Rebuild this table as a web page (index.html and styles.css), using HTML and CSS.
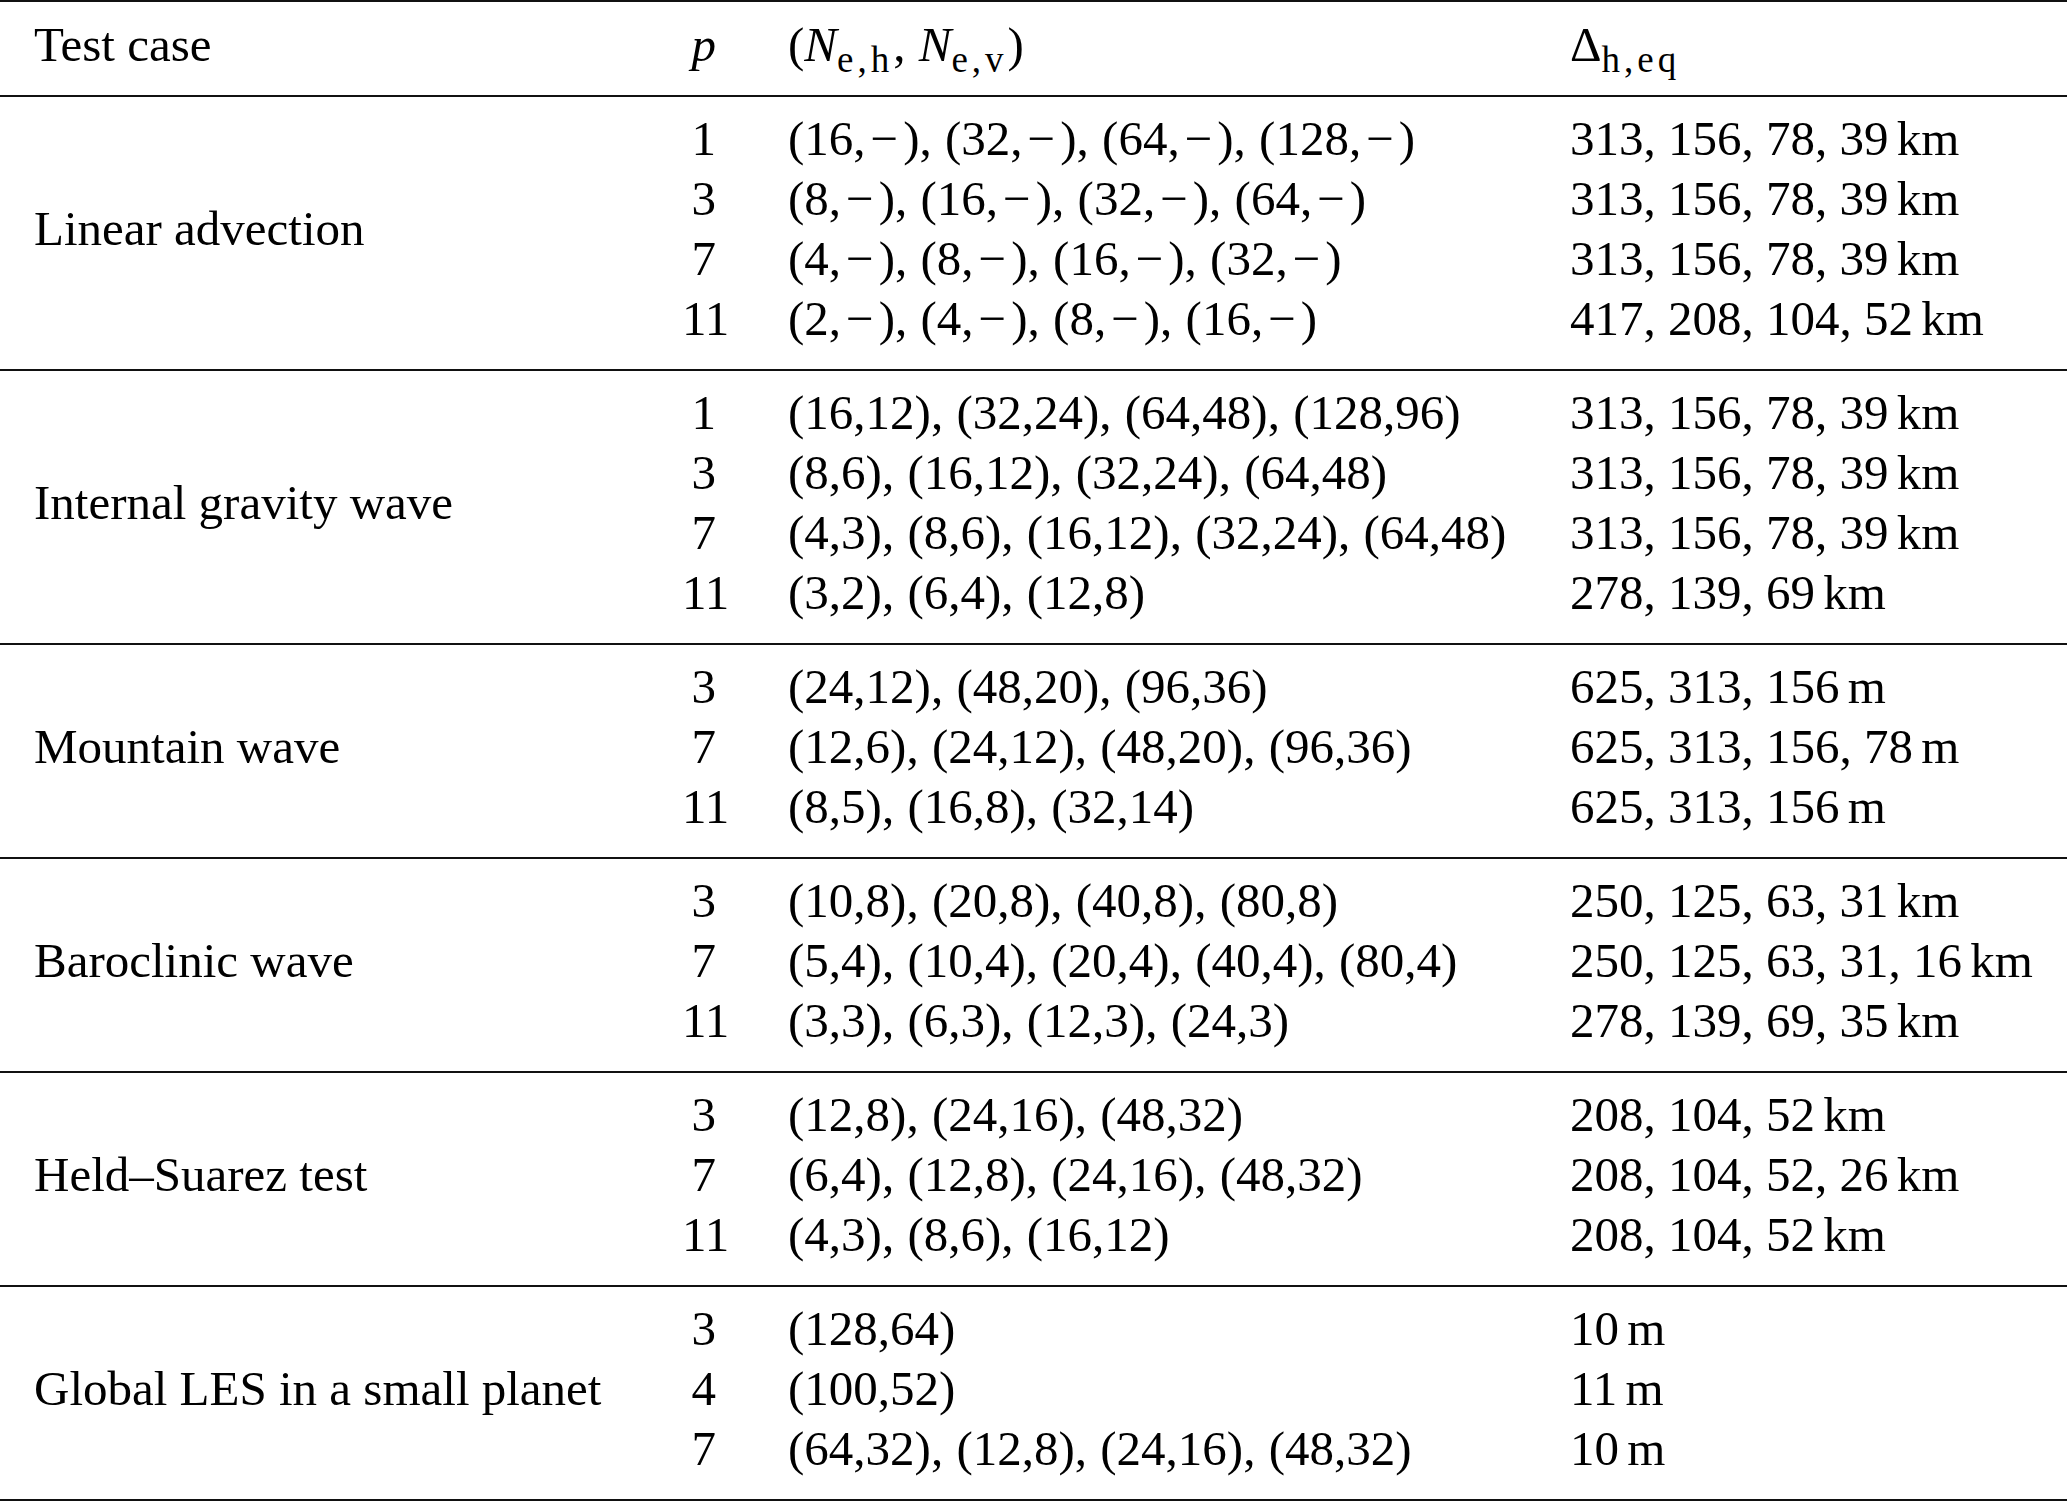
FILE: index.html
```html
<!DOCTYPE html>
<html lang="en">
<head>
<meta charset="utf-8">
<title>Test cases</title>
<link rel="stylesheet" href="styles.css">
</head>
<body>
<div class="table">
  <div class="head">
    <div class="c-case">Test case</div>
    <div class="c-p"><i>p</i></div>
    <div class="c-n">(<i>N</i><sub>e,h</sub>, <i>N</i><sub>e,v</sub>)</div>
    <div class="c-d">Δ<sub>h,eq</sub></div>
  </div>

  <div class="group g4">
    <div class="c-case">Linear advection</div>
    <div class="c-p">1</div><div class="c-n">(16,<span class="m">−</span>), (32,<span class="m">−</span>), (64,<span class="m">−</span>), (128,<span class="m">−</span>)</div><div class="c-d">313, 156, 78, 39<span class="u">km</span></div>
    <div class="c-p">3</div><div class="c-n">(8,<span class="m">−</span>), (16,<span class="m">−</span>), (32,<span class="m">−</span>), (64,<span class="m">−</span>)</div><div class="c-d">313, 156, 78, 39<span class="u">km</span></div>
    <div class="c-p">7</div><div class="c-n">(4,<span class="m">−</span>), (8,<span class="m">−</span>), (16,<span class="m">−</span>), (32,<span class="m">−</span>)</div><div class="c-d">313, 156, 78, 39<span class="u">km</span></div>
    <div class="c-p">11</div><div class="c-n">(2,<span class="m">−</span>), (4,<span class="m">−</span>), (8,<span class="m">−</span>), (16,<span class="m">−</span>)</div><div class="c-d">417, 208, 104, 52<span class="u">km</span></div>
  </div>

  <div class="group g4">
    <div class="c-case">Internal gravity wave</div>
    <div class="c-p">1</div><div class="c-n">(16,12), (32,24), (64,48), (128,96)</div><div class="c-d">313, 156, 78, 39<span class="u">km</span></div>
    <div class="c-p">3</div><div class="c-n">(8,6), (16,12), (32,24), (64,48)</div><div class="c-d">313, 156, 78, 39<span class="u">km</span></div>
    <div class="c-p">7</div><div class="c-n">(4,3), (8,6), (16,12), (32,24), (64,48)</div><div class="c-d">313, 156, 78, 39<span class="u">km</span></div>
    <div class="c-p">11</div><div class="c-n">(3,2), (6,4), (12,8)</div><div class="c-d">278, 139, 69<span class="u">km</span></div>
  </div>

  <div class="group g3">
    <div class="c-case">Mountain wave</div>
    <div class="c-p">3</div><div class="c-n">(24,12), (48,20), (96,36)</div><div class="c-d">625, 313, 156<span class="u">m</span></div>
    <div class="c-p">7</div><div class="c-n">(12,6), (24,12), (48,20), (96,36)</div><div class="c-d">625, 313, 156, 78<span class="u">m</span></div>
    <div class="c-p">11</div><div class="c-n">(8,5), (16,8), (32,14)</div><div class="c-d">625, 313, 156<span class="u">m</span></div>
  </div>

  <div class="group g3">
    <div class="c-case">Baroclinic wave</div>
    <div class="c-p">3</div><div class="c-n">(10,8), (20,8), (40,8), (80,8)</div><div class="c-d">250, 125, 63, 31<span class="u">km</span></div>
    <div class="c-p">7</div><div class="c-n">(5,4), (10,4), (20,4), (40,4), (80,4)</div><div class="c-d">250, 125, 63, 31, 16<span class="u">km</span></div>
    <div class="c-p">11</div><div class="c-n">(3,3), (6,3), (12,3), (24,3)</div><div class="c-d">278, 139, 69, 35<span class="u">km</span></div>
  </div>

  <div class="group g3">
    <div class="c-case">Held–Suarez test</div>
    <div class="c-p">3</div><div class="c-n">(12,8), (24,16), (48,32)</div><div class="c-d">208, 104, 52<span class="u">km</span></div>
    <div class="c-p">7</div><div class="c-n">(6,4), (12,8), (24,16), (48,32)</div><div class="c-d">208, 104, 52, 26<span class="u">km</span></div>
    <div class="c-p">11</div><div class="c-n">(4,3), (8,6), (16,12)</div><div class="c-d">208, 104, 52<span class="u">km</span></div>
  </div>

  <div class="group g3">
    <div class="c-case">Global LES in a small planet</div>
    <div class="c-p">3</div><div class="c-n">(128,64)</div><div class="c-d">10<span class="u">m</span></div>
    <div class="c-p">4</div><div class="c-n">(100,52)</div><div class="c-d">11<span class="u">m</span></div>
    <div class="c-p">7</div><div class="c-n">(64,32), (12,8), (24,16), (48,32)</div><div class="c-d">10<span class="u">m</span></div>
  </div>
</div>
</body>
</html>
```

FILE: styles.css
```css
html, body {
  margin: 0;
  padding: 0;
  background: #ffffff;
}

body {
  font-family: "Liberation Serif", "Times New Roman", serif;
  font-size: 49px;
  line-height: 60px;
  color: #000000;
}

.table {
  border-top: 2px solid #111111;
}

.head,
.group {
  display: grid;
  grid-template-columns: 648px 34px 854px 1fr;
  padding-left: 34px;
  border-bottom: 2px solid #111111;
}

.head {
  padding-top: 13px;
  padding-bottom: 20px;
}

.group {
  padding-top: 12px;
  padding-bottom: 20px;
}

.g4 {
  grid-template-rows: repeat(4, 60px);
}

.g3 {
  grid-template-rows: repeat(3, 60px);
}

.c-case {
  grid-column: 1;
  white-space: nowrap;
}

.group .c-case {
  grid-row: 1 / -1;
  align-self: center;
}

.c-p {
  grid-column: 2;
  text-align: right;
  white-space: nowrap;
}

.c-n {
  grid-column: 3;
  padding-left: 72px;
  white-space: nowrap;
  word-spacing: 1px;
}

.c-d {
  grid-column: 4;
  white-space: nowrap;
}

.m {
  margin: 0 5px 0 5px;
}

.u {
  margin-left: 0.17em;
}

sub {
  font-size: 37px;
  line-height: 0;
  letter-spacing: 4px;
  vertical-align: -11px;
}

i {
  font-style: italic;
}
```
